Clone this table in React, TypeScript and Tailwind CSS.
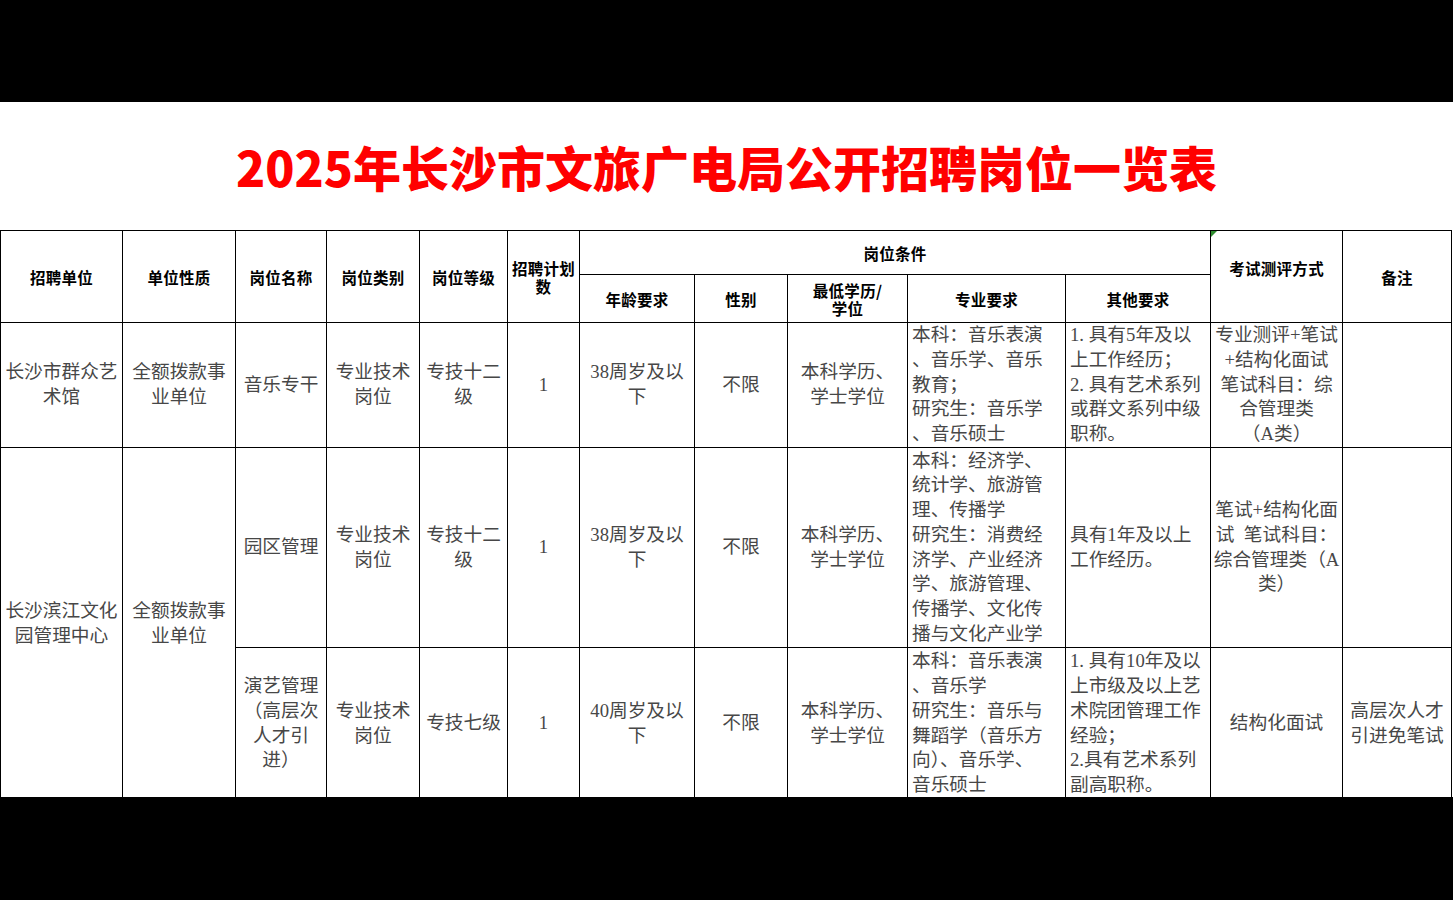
import React from 'react';

type Align = 'center' | 'left';

interface CellProps {
  lines: string[];
  align?: Align;
  rowSpan?: number;
}

const widths = [122, 113, 91, 93, 88, 72, 115, 93, 120, 158, 145, 132, 109];

function Head({ lines, rowSpan, colSpan }: { lines: string[]; rowSpan?: number; colSpan?: number }) {
  return (
    <th
      rowSpan={rowSpan}
      colSpan={colSpan}
      className="border border-black p-0 align-middle text-center font-bold text-[15.5px] leading-[18px] tracking-[0.3px] text-black font-['Noto_Sans_CJK_SC',sans-serif]"
    >
      {lines.map((l, i) => (
        <div key={i} className="whitespace-nowrap">{l}</div>
      ))}
    </th>
  );
}

function Cell({ lines, align = 'center', rowSpan }: CellProps) {
  return (
    <td
      rowSpan={rowSpan}
      className={
        align === 'left'
          ? "border border-black p-0 pl-[4px] align-middle text-left text-[18.7px] leading-[24.7px] text-[#474747] font-['Liberation_Serif','Noto_Sans_CJK_SC',serif]"
          : "border border-black p-0 align-middle text-center text-[18.7px] leading-[24.7px] text-[#474747] font-['Liberation_Serif','Noto_Sans_CJK_SC',serif]"
      }
    >
      {lines.map((l, i) => (
        <div key={i} className="whitespace-nowrap">{l}</div>
      ))}
    </td>
  );
}

export default function App() {
  return (
    <div className="w-[1453px] h-[900px] bg-black flex flex-col overflow-hidden">
      <div className="h-[102px] shrink-0" />
      <div className="h-[695px] shrink-0 bg-white overflow-hidden">
        <div className="h-[128px] flex items-center justify-center">
          <h1 className="text-[48px] leading-none font-black text-[#ff0000] font-['Noto_Sans_CJK_SC',sans-serif]">
            2025年长沙市文旅广电局公开招聘岗位一览表
          </h1>
        </div>
        <table className="table-fixed border-collapse w-[1452px]">
          <colgroup>
            {widths.map((w, i) => (
              <col key={i} style={{ width: w }} />
            ))}
          </colgroup>
          <thead>
            <tr className="h-[44px]">
              <Head lines={['招聘单位']} rowSpan={2} />
              <Head lines={['单位性质']} rowSpan={2} />
              <Head lines={['岗位名称']} rowSpan={2} />
              <Head lines={['岗位类别']} rowSpan={2} />
              <Head lines={['岗位等级']} rowSpan={2} />
              <Head lines={['招聘计划', '数']} rowSpan={2} />
              <Head lines={['岗位条件']} colSpan={5} />
              <th
                rowSpan={2}
                className="relative border border-black p-0 align-middle text-center font-bold text-[15.5px] leading-[18px] tracking-[0.3px] text-black font-['Noto_Sans_CJK_SC',sans-serif]"
              >
                <svg className="absolute left-0 top-0" width="6" height="6" viewBox="0 0 6 6">
                  <polygon points="0,0 6,0 0,6" fill="#2e8b2e" />
                </svg>
                <div className="pb-[18px] whitespace-nowrap">考试测评方式</div>
              </th>
              <Head lines={['备注']} rowSpan={2} />
            </tr>
            <tr className="h-[48px]">
              <Head lines={['年龄要求']} />
              <Head lines={['性别']} />
              <Head lines={['最低学历/', '学位']} />
              <Head lines={['专业要求']} />
              <Head lines={['其他要求']} />
            </tr>
          </thead>
          <tbody>
            <tr className="h-[125px]">
              <Cell lines={['长沙市群众艺', '术馆']} />
              <Cell lines={['全额拨款事', '业单位']} />
              <Cell lines={['音乐专干']} />
              <Cell lines={['专业技术', '岗位']} />
              <Cell lines={['专技十二', '级']} />
              <Cell lines={['1']} />
              <Cell lines={['38周岁及以', '下']} />
              <Cell lines={['不限']} />
              <Cell lines={['本科学历、', '学士学位']} />
              <Cell
                align="left"
                lines={['本科：音乐表演', '、音乐学、音乐', '教育；', '研究生：音乐学', '、音乐硕士']}
              />
              <Cell
                align="left"
                lines={['1. 具有5年及以', '上工作经历；', '2. 具有艺术系列', '或群文系列中级', '职称。']}
              />
              <Cell lines={['专业测评+笔试', '+结构化面试', '笔试科目：综', '合管理类', '（A类）']} />
              <Cell lines={[]} />
            </tr>
            <tr className="h-[200px]">
              <Cell rowSpan={2} lines={['长沙滨江文化', '园管理中心']} />
              <Cell rowSpan={2} lines={['全额拨款事', '业单位']} />
              <Cell lines={['园区管理']} />
              <Cell lines={['专业技术', '岗位']} />
              <Cell lines={['专技十二', '级']} />
              <Cell lines={['1']} />
              <Cell lines={['38周岁及以', '下']} />
              <Cell lines={['不限']} />
              <Cell lines={['本科学历、', '学士学位']} />
              <Cell
                align="left"
                lines={[
                  '本科：经济学、',
                  '统计学、旅游管',
                  '理、传播学',
                  '研究生：消费经',
                  '济学、产业经济',
                  '学、旅游管理、',
                  '传播学、文化传',
                  '播与文化产业学',
                ]}
              />
              <Cell align="left" lines={['具有1年及以上', '工作经历。']} />
              <Cell lines={['笔试+结构化面', '试\u2002笔试科目：', '综合管理类（A', '类）']} />
              <Cell lines={[]} />
            </tr>
            <tr className="h-[152px]">
              <Cell lines={['演艺管理', '（高层次', '人才引', '进）']} />
              <Cell lines={['专业技术', '岗位']} />
              <Cell lines={['专技七级']} />
              <Cell lines={['1']} />
              <Cell lines={['40周岁及以', '下']} />
              <Cell lines={['不限']} />
              <Cell lines={['本科学历、', '学士学位']} />
              <Cell
                align="left"
                lines={['本科：音乐表演', '、音乐学', '研究生：音乐与', '舞蹈学（音乐方', '向）、音乐学、', '音乐硕士']}
              />
              <Cell
                align="left"
                lines={['1. 具有10年及以', '上市级及以上艺', '术院团管理工作', '经验；', '2.具有艺术系列', '副高职称。']}
              />
              <Cell lines={['结构化面试']} />
              <Cell lines={['高层次人才', '引进免笔试']} />
            </tr>
          </tbody>
        </table>
      </div>
      <div className="flex-1" />
    </div>
  );
}
